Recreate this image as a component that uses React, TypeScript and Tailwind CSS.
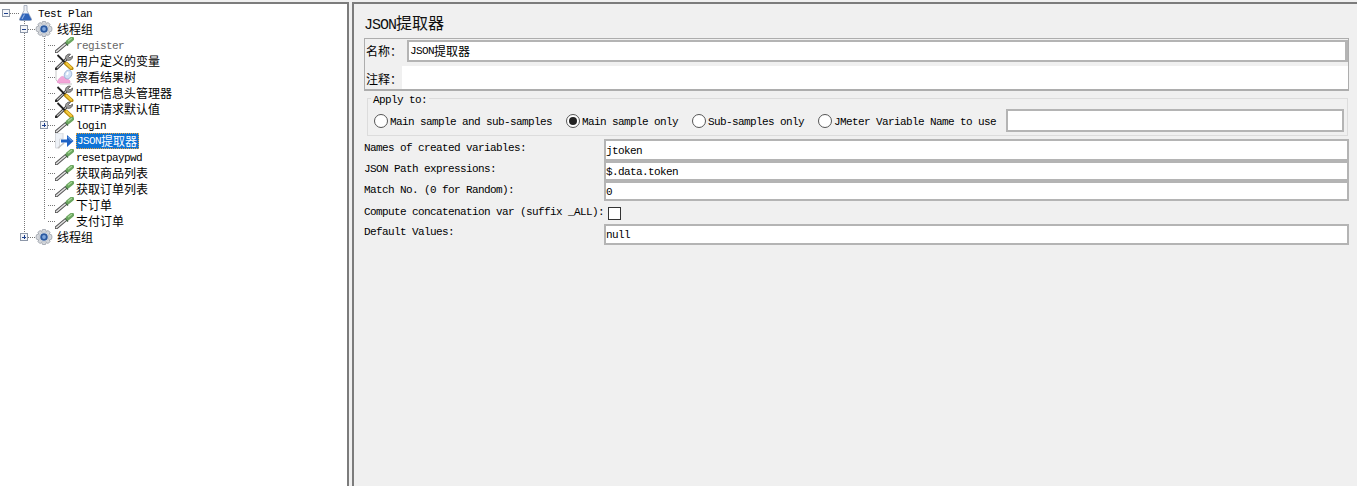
import React from "react";

// tiny tree icons, drawn to match the JMeter ones
const Pipette = () => (
  <svg width="19" height="16" viewBox="0 0 19 16" className="shrink-0">
    <path d="M1 15 L11 6.5" stroke="#555" strokeWidth="3.4" strokeLinecap="round" />
    <path d="M1.5 14.5 L11 6.5" stroke="#e2e2e2" strokeWidth="1.6" strokeLinecap="round" />
    <path d="M10.5 5.5 L13 8.5" stroke="#3f5f3f" strokeWidth="1.5" />
    <path d="M13 5 L17 1.8" stroke="#6aa55f" strokeWidth="4.4" strokeLinecap="round" />
    <path d="M13.5 3.8 L16.5 1.5" stroke="#a6d596" strokeWidth="1.3" strokeLinecap="round" />
  </svg>
);

const Tools = () => (
  <svg width="19" height="17" viewBox="0 0 19 17" className="shrink-0">
    <path d="M1 16 L12.5 5" stroke="#2a2a2a" strokeWidth="3" strokeLinecap="round" />
    <path d="M2 15 L12.5 5" stroke="#c4c4c4" strokeWidth="1.2" />
    <path d="M10.5 5.5 C10 2.5 13 0.5 15.5 1.2 L13.5 3.5 L15 5 L17.5 3 C18 6 15 8 12.5 7.2 Z" fill="#9a9a9a" stroke="#444" strokeWidth="0.7" />
    <path d="M2.5 2 L11 10.5" stroke="#222" strokeWidth="1.8" />
    <path d="M11 10.5 L16.5 15.5" stroke="#b88a10" strokeWidth="4" strokeLinecap="round" />
    <path d="M11.5 10.5 L16 14.8" stroke="#f6cb3a" strokeWidth="2.2" strokeLinecap="round" />
  </svg>
);

const Flask = () => (
  <svg width="13" height="16" viewBox="0 0 13 16" className="shrink-0">
    <path d="M5 0.5 H8 V5.5 L12.5 14 Q13 15.5 11.5 15.5 H1.5 Q0 15.5 0.5 14 L5 5.5 Z" fill="#eef1f6" stroke="#9aa3b5" strokeWidth="0.8" />
    <path d="M3.6 8.5 H9.4 L12.3 14.2 Q12.6 15.2 11.4 15.2 H1.6 Q0.4 15.2 0.7 14.2 Z" fill="#2f63b8" />
    <path d="M5.5 9.5 L3 14" stroke="#8fb2e8" strokeWidth="1.2" />
  </svg>
);

const Gear = () => (
  <svg width="18" height="16" viewBox="0 0 18 16" className="shrink-0">
    <path d="M7.5 0.5 H10.5 L11 2.4 L13 1.6 L15.2 3.4 L14.2 5 L16.5 5.8 L17 8 L16.5 10.2 L14.2 11 L15.2 12.6 L13 14.4 L11 13.6 L10.5 15.5 H7.5 L7 13.6 L5 14.4 L2.8 12.6 L3.8 11 L1.5 10.2 L1 8 L1.5 5.8 L3.8 5 L2.8 3.4 L5 1.6 L7 2.4 Z" fill="#d5d8dd" stroke="#9ba0a8" strokeWidth="0.8" />
    <circle cx="9" cy="8" r="4.8" fill="#f4f5f7" stroke="#a5abb4" strokeWidth="0.6" />
    <circle cx="9" cy="8" r="3.8" fill="#2c5aa0" />
    <circle cx="9" cy="8" r="1.9" fill="#7fa6dc" />
  </svg>
);

const ResultTree = () => (
  <svg width="19" height="16" viewBox="0 0 19 16" className="shrink-0">
    <path d="M1 1 L1 11 L5 15 H17" fill="none" stroke="#c8c8c8" strokeWidth="1" />
    <path d="M2 13 C4 9 7 6 9 8 C11 10 13 9 15 12 L15 14 H3 Z" fill="#f3a6d8" stroke="#e38cc8" strokeWidth="0.5" />
    <ellipse cx="13" cy="5.5" rx="3.6" ry="4.6" transform="rotate(25 13 5.5)" fill="#cfe0f5" stroke="#8fa9cf" strokeWidth="0.7" />
    <ellipse cx="12.4" cy="4.6" rx="1.1" ry="1.8" transform="rotate(25 12.4 4.6)" fill="#fff" />
  </svg>
);

const Extractor = () => (
  <svg width="19" height="16" viewBox="0 0 19 16" className="shrink-0">
    <path d="M0.5 0 H8 V6 H4.5 V15 H0.5 Z" fill="#eef2f7" stroke="#d6d9de" strokeWidth="1" />
    <path d="M3 15 L9 10" stroke="#c2c2c2" strokeWidth="1.6" />
    <path d="M6 6.5 H12 V2 L18.5 8 L12 14 V9.5 H6 Z" fill="#1f62c4" />
    <path d="M12.8 4 L16.5 8" stroke="#7fb0ec" strokeWidth="1" />
  </svg>
);

const icons = { pipette: Pipette, tools: Tools, flask: Flask, gear: Gear, result: ResultTree, extractor: Extractor };

// latin and chinese runs need different sizes to keep the 6px / 12px grid
const Mixed = ({ text }: { text: string }) => (
  <>
    {text.split(/([\u4e00-\u9fff：]+)/).filter(Boolean).map((run, i) =>
      /[\u4e00-\u9fff：]/.test(run) ? (
        <span key={i} className="font-['Noto_Sans_CJK_SC',sans-serif] text-[12px] leading-[16px] tracking-normal">{run}</span>
      ) : (
        <span key={i} className="font-['Liberation_Mono',monospace] text-[11px] leading-[16px] tracking-[-0.6px] whitespace-pre">{run}</span>
      )
    )}
  </>
);

const Expander = ({ open }: { open: boolean }) => (
  <span className="relative flex h-[8px] w-[8px] shrink-0 items-center justify-center border border-[#8d97a8] bg-[#f3f5f8]">
    <span className="h-px w-[4px] bg-[#1c3f8c]" />
    {!open && <span className="absolute h-[4px] w-px bg-[#1c3f8c]" />}
  </span>
);

interface RowProps {
  level: 0 | 1 | 2;
  icon: keyof typeof icons;
  label: string;
  expander?: "open" | "closed";
  selected?: boolean;
  gray?: boolean;
  latin?: boolean;
}

const TreeRow = ({ level, icon, label, expander, selected, gray, latin }: RowProps) => {
  const Icon = icons[icon];
  const indent = level === 0 ? "pl-[2px]" : level === 1 ? "pl-[20px]" : "pl-[40px]";
  const gapWidth = level === 0 ? "w-[9px]" : "w-[7px]";
  const labelGap = level === 0 ? "ml-[6px]" : level === 1 ? "ml-[4px]" : "ml-[2px]";
  return (
    <div className={`flex h-[16px] items-center ${indent}`}>
      {expander ? <Expander open={expander === "open"} /> : <span className="h-[8px] w-[8px] shrink-0" />}
      <span className={`h-0 ${gapWidth} shrink-0 border-t border-dotted border-[#777]`} />
      <Icon />
      {selected ? (
        <span className={`${labelGap} flex h-[16px] items-center border border-dotted border-[#e8a33d] bg-[#0f73d6] pr-[1px] text-white`}>
          <Mixed text={label} />
        </span>
      ) : (
        <span className={`${labelGap} flex h-[16px] items-center ${latin ? "pt-[2px]" : ""} ${gray ? "text-[#666]" : "text-black"}`}>
          <Mixed text={label} />
        </span>
      )}
    </div>
  );
};

const rows: RowProps[] = [
  { level: 0, icon: "flask", label: "Test Plan", expander: "open", latin: true },
  { level: 1, icon: "gear", label: "线程组", expander: "open" },
  { level: 2, icon: "pipette", label: "register", gray: true, latin: true },
  { level: 2, icon: "tools", label: "用户定义的变量" },
  { level: 2, icon: "result", label: "察看结果树" },
  { level: 2, icon: "tools", label: "HTTP信息头管理器" },
  { level: 2, icon: "tools", label: "HTTP请求默认值" },
  { level: 2, icon: "pipette", label: "login", expander: "closed", latin: true },
  { level: 2, icon: "extractor", label: "JSON提取器", selected: true },
  { level: 2, icon: "pipette", label: "resetpaypwd", latin: true },
  { level: 2, icon: "pipette", label: "获取商品列表" },
  { level: 2, icon: "pipette", label: "获取订单列表" },
  { level: 2, icon: "pipette", label: "下订单" },
  { level: 2, icon: "pipette", label: "支付订单" },
  { level: 1, icon: "gear", label: "线程组", expander: "closed" },
];

const Radio = ({ label, checked, className }: { label: string; checked?: boolean; className: string }) => (
  <label className={`flex items-center ${className}`}>
    <span className="flex h-[14px] w-[14px] shrink-0 items-center justify-center rounded-full border border-[#555] bg-white">
      {checked && <span className="h-[8px] w-[8px] rounded-full bg-[#222]" />}
    </span>
    <span className="ml-[2px] flex items-center pt-[2px]">
      <Mixed text={label} />
    </span>
  </label>
);

const Field = ({ value, className }: { value: string; className: string }) => (
  <div className={`flex items-center border-2 border-[#b4b4b4] bg-white text-black ${className}`}>
    <Mixed text={value} />
  </div>
);

const FormLabel = ({ text, className }: { text: string; className: string }) => (
  <div className={`flex items-start whitespace-nowrap ${className}`}>
    <Mixed text={text} />
  </div>
);

export default function App() {
  return (
    <div className="flex h-[486px] w-[1357px] overflow-hidden bg-[#f0f0f0] pt-[2px] text-black">
      {/* tree */}
      <div className="relative w-[349px] shrink-0 border-t-2 border-r-2 border-[#7c7c7c] bg-white pt-[1px]">
        <span className="absolute left-[24px] top-[17px] h-[213px] border-l border-dotted border-[#777]" />
        <span className="absolute left-[44px] top-[32px] h-[183px] border-l border-dotted border-[#777]" />
        <div className="relative">
          {rows.map((r, i) => (
            <TreeRow key={i} {...r} />
          ))}
        </div>
      </div>

      {/* form */}
      <div className="ml-[3px] flex-1 border-t-2 border-l-2 border-[#7c7c7c] pl-[10px] pr-[8px]">
        <div className="flex h-[34px] items-baseline pt-[8px] text-[#111]">
          <span className="font-['Liberation_Mono',monospace] text-[15px] leading-[20px] tracking-[-1px]">JSON</span>
          <span className="font-['Noto_Sans_CJK_SC',sans-serif] text-[16px] leading-[20px]">提取器</span>
        </div>

        <div className="flex h-[53px] flex-col border border-b-2 border-[#adadad]">
          <div className="flex h-[27px] items-start pl-[1px] pt-[1px]">
            <span className="flex h-[22px] w-[41px] shrink-0 items-center"><Mixed text="名称：" /></span>
            <Field value="JSON提取器" className="h-[22px] flex-1 border-r-[3px] pl-[1px]" />
          </div>
          <div className="flex flex-1 items-center pl-[1px]">
            <span className="flex w-[36px] shrink-0 items-center pt-[2px]"><Mixed text="注释：" /></span>
            <div className="h-full flex-1 bg-white" />
          </div>
        </div>

        <fieldset className="ml-[3px] mr-[1px] mt-[1px] h-[44px] border border-[#dcdcdc] pl-[6px] pr-[3px]">
          <legend className="-ml-[3px] flex h-[12px] items-start px-[2px]"><Mixed text="Apply to:" /></legend>
          <div className="mt-[5px] flex h-[23px] items-center">
            <Radio label="Main sample and sub-samples" className="w-[192px]" />
            <Radio label="Main sample only" checked className="w-[126px]" />
            <Radio label="Sub-samples only" className="w-[126px]" />
            <Radio label="JMeter Variable Name to use" className="w-[188px]" />
            <div className="h-[23px] flex-1 border-2 border-[#b4b4b4] bg-white" />
          </div>
        </fieldset>

        <div className="mt-[3px] grid grid-cols-[240px_1fr] auto-rows-min">
          <FormLabel text="Names of created variables:" className="h-[22px] pt-[1px]" />
          <Field value="jtoken" className="h-[22px] pt-[1px]" />
          <FormLabel text="JSON Path expressions:" className="h-[20px]" />
          <Field value="$.data.token" className="h-[20px] pt-[1px]" />
          <FormLabel text="Match No. (0 for Random):" className="h-[20px] pt-[1px]" />
          <Field value="0" className="h-[20px] pt-[1px]" />
          <FormLabel text="Compute concatenation var (suffix _ALL):" className="h-[23px] pt-[3px]" />
          <div className="flex h-[23px] items-center pl-[4px] pt-[2px]">
            <span className="h-[13px] w-[13px] border border-[#333] bg-white" />
          </div>
          <FormLabel text="Default Values:" className="h-[21px]" />
          <Field value="null" className="h-[21px]" />
        </div>
      </div>
    </div>
  );
}
